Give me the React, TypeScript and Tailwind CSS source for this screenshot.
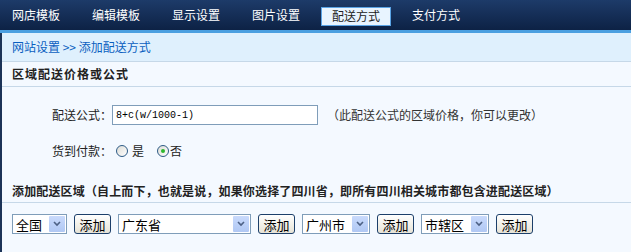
import React from "react";

const FONT = '"Noto Sans CJK SC", "Liberation Sans", sans-serif';

function Radio({ checked }: { checked?: boolean }) {
  return (
    <span className="relative inline-flex h-[12px] w-[12px] items-center justify-center rounded-full border border-[#2d5b86] bg-gradient-to-br from-[#dcdcd6] to-[#ffffff]">
      {checked && <span className="h-[4px] w-[4px] rounded-full bg-[#2eb82e]" />}
    </span>
  );
}

function Select({ text, width }: { text: string; width: string }) {
  return (
    <div className={`flex h-[20px] items-center justify-between border border-[#7f9db9] bg-white pl-[3px] pr-[1px] ${width}`}>
      <span className="text-[13px] leading-none text-black">{text}</span>
      <span className="flex h-[16px] w-[16px] items-center justify-center rounded-[1px] bg-gradient-to-b from-[#c9dafc] to-[#b0c8f4]">
        <svg width="8" height="6" viewBox="0 0 8 6">
          <path d="M1 1 L4 4 L7 1" fill="none" stroke="#4d6185" strokeWidth="1.6" />
        </svg>
      </span>
    </div>
  );
}

function Btn() {
  return (
    <button className="flex h-[20px] w-[37px] items-center justify-center rounded-[3px] border border-[#1c3f6a] bg-gradient-to-b from-[#ffffff] to-[#e6e3d6] text-[13px] leading-none text-black">
      添加
    </button>
  );
}

export default function App() {
  const nav = ["网店模板", "编辑模板", "显示设置", "图片设置", "配送方式", "支付方式"];
  return (
    <div className="h-[252px] w-[631px] overflow-hidden bg-[#f4f9ff] text-[12px]" style={{ fontFamily: FONT }}>
      <div className="flex h-[30px] items-center gap-[10px] bg-gradient-to-b from-[#1d3b69] to-[#0d2245] pl-[1px]">
        {nav.map((n, i) =>
          i === 4 ? (
            <div key={n} className="mt-[2px] flex h-[19px] w-[70px] items-center justify-center border border-[#5aa4e6] bg-[#e8f4ff] text-[#222]">
              {n}
            </div>
          ) : (
            <div key={n} className="flex w-[70px] items-center justify-center text-white">
              {n}
            </div>
          )
        )}
      </div>
      <div className="h-[3px] bg-[#4b9fe0]" />
      <div className="h-[219px] border-l-2 border-[#1c3357]">
        <div className="flex h-[29px] items-center border-b border-[#c6d8e8] bg-[#dff0fd] pl-[10px] text-[#0b5fc0]">
          网站设置 &gt;&gt; 添加配送方式
        </div>
        <div className="flex h-[25px] items-center border-b border-[#c6d8e8] pl-[10px] font-bold tracking-[1px] text-[#222]">
          区域配送价格或公式
        </div>
        <div className="mt-[18px] flex h-[20px] items-center pl-[50px]">
          <span className="w-[60px] text-[#222]">配送公式：</span>
          <div className="flex h-[20px] w-[206px] items-center border border-[#7f9db9] bg-white pl-[3px] text-[10px] text-black" style={{ fontFamily: '"Liberation Mono", monospace' }}>
            8+c(w/1000-1)
          </div>
          <span className="ml-[9px] text-[#333]">（此配送公式的区域价格，你可以更改）</span>
        </div>
        <div className="mt-[16px] flex h-[20px] items-center pl-[50px]">
          <span className="w-[60px] text-[#222]">货到付款：</span>
          <span className="ml-[4px] flex items-center">
            <Radio />
            <span className="ml-[4px] text-[#222]">是</span>
          </span>
          <span className="ml-[13px] flex items-center">
            <Radio checked />
            <span className="ml-[1px] text-[#222]">否</span>
          </span>
        </div>
        <div className="mt-[18px] flex h-[24px] items-center border-b border-[#c6d8e8] pl-[10px] font-bold tracking-[0.15px] text-[#222]">
          添加配送区域（自上而下，也就是说，如果你选择了四川省，即所有四川相关城市都包含进配送区域）
        </div>
        <div className="mt-[11px] flex items-center gap-[7px] pl-[10px]">
          <Select text="全国" width="w-[55px]" />
          <Btn />
          <Select text="广东省" width="w-[133px]" />
          <Btn />
          <Select text="广州市" width="w-[68px]" />
          <Btn />
          <Select text="市辖区" width="w-[68px]" />
          <Btn />
        </div>
      </div>
    </div>
  );
}
